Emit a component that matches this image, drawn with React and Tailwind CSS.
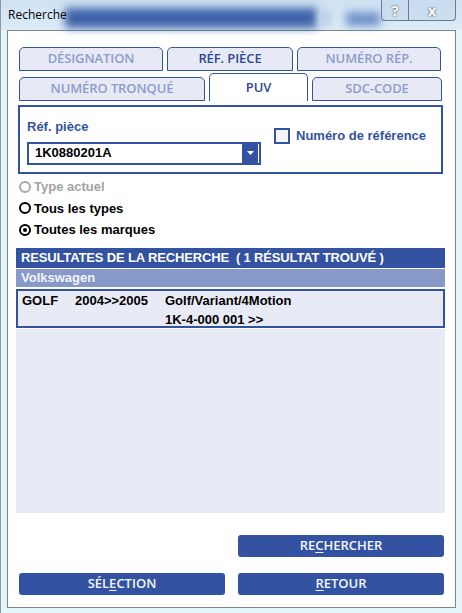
import React, { useState } from 'react';

const ui = "font-['Open_Sans','Noto_Sans',sans-serif]";
const arial = "font-['Liberation_Sans',Arial,sans-serif]";

const Tab = ({ label, width, active, dim, onClick }) => (
  <button
    onClick={onClick}
    className={`${ui} ${width} flex items-center justify-center rounded-t-[5px] border border-[#3353a2] text-[13px] font-semibold tracking-[-0.1px] ${
      active
        ? 'h-[28px] border-b-0 bg-white text-[#2c4896]'
        : 'h-[24px] bg-[#e7eaf4] ' + (dim ? 'text-[#8d9ccf]' : 'text-[#2c4896]')
    }`}
  >
    {label}
  </button>
);

const Radio = ({ label, checked, disabled }) => (
  <div className={`${arial} flex h-[21.5px] items-center gap-[3px] text-[13px] font-bold ${disabled ? 'text-[#a3a3a3]' : 'text-black'}`}>
    <span
      className={`flex h-[12px] w-[12px] items-center justify-center rounded-full border-2 ${
        disabled ? 'border-[#a8a8a8]' : 'border-black'
      }`}
    >
      {checked && <span className="h-[4px] w-[4px] rounded-full bg-black" />}
    </span>
    {label}
  </div>
);

const ActionButton = ({ before, hot, after }) => (
  <button className={`${ui} flex h-[22px] w-[206px] items-center justify-center rounded-[3px] bg-[#3353a2] text-[13px] font-semibold text-[#f4f6fb]`}>
    {before}
    <span className="underline underline-offset-2">{hot}</span>
    {after}
  </button>
);

export default function App() {
  const [tab, setTab] = useState('PUV');
  const [byNumber, setByNumber] = useState(false);

  return (
    <div className="relative h-[613px] w-[462px] overflow-hidden border-l border-[#8a9a9e] bg-[#e4f6fa]">
      {/* window caption */}
      <div className="relative h-[30px] bg-gradient-to-b from-[#cfe1f2] to-[#dcebf7]">
        <div className="absolute left-[64px] top-[8px] h-[20px] w-[252px] bg-[#3e63a9] blur-[4px]" />
        <div className="absolute left-[318px] top-[10px] h-[16px] w-[12px] bg-[#bcd2ea] blur-[3px]" />
        <div className="absolute left-[345px] top-[12px] h-[14px] w-[34px] bg-[#6f93c8] blur-[4px]" />
        <div className={`relative pl-[7px] pt-[6px] ${ui} text-[12px] text-black`}>Recherche</div>
        <div className="absolute right-[6px] top-0 flex h-[21px]">
          <div className="flex w-[28px] items-center justify-center rounded-bl-[4px] border border-t-0 border-[#6c7c90] bg-[#c8daee]/70 text-[14px] font-bold text-white [text-shadow:0_0_2px_#222]">
            ?
          </div>
          <div className="flex w-[47px] items-center justify-center rounded-br-[4px] border border-l-0 border-t-0 border-[#6c7c90] bg-[#c8daee]/70 text-[14px] font-bold text-white [text-shadow:0_0_2px_#222]">
            x
          </div>
        </div>
      </div>

      {/* client area */}
      <div className="ml-[6px] flex h-[578px] w-[449px] flex-col border border-[#7b8686] bg-white">
        <div className="flex flex-col gap-[2px] pl-[11px] pt-[16px]">
          <div className="flex gap-[4px]">
            <Tab label="DÉSIGNATION" width="w-[144px]" dim onClick={() => setTab('DES')} />
            <Tab label="RÉF. PIÈCE" width="w-[126px]" onClick={() => setTab('REF')} />
            <Tab label="NUMÉRO RÉP." width="w-[144px]" dim onClick={() => setTab('NUM')} />
          </div>
          <div className="flex items-end gap-[4px]">
            <Tab label="NUMÉRO TRONQUÉ" width="w-[186px]" dim onClick={() => setTab('TRO')} />
            <Tab label="PUV" width="w-[99px]" active={tab === 'PUV'} onClick={() => setTab('PUV')} />
            <Tab label="SDC-CODE" width="w-[130px]" dim onClick={() => setTab('SDC')} />
          </div>
        </div>

        {/* search criteria */}
        <div className="ml-[10px] mt-[4px] flex h-[69px] w-[425px] border-2 border-[#3353a2]">
          <div className="flex flex-col pl-[7px] pt-[10px]">
            <span className={`${arial} text-[13px] font-bold text-[#3353a2]`}>Réf. pièce</span>
            <div className="mt-[5px] flex h-[23px] w-[234px] items-center justify-between border-2 border-[#3353a2] pl-[6px] pr-[1px]">
              <span className={`${arial} text-[13px] font-bold text-black`}>1K0880201A</span>
              <span className="flex h-[19px] w-[16px] items-center justify-center bg-[#3353a2]">
                <svg width="7" height="4" viewBox="0 0 7 4">
                  <path d="M0 0h7L3.5 4z" fill="#fff" />
                </svg>
              </span>
            </div>
          </div>
          <label className="ml-[13px] mt-[21px] flex h-[16px] cursor-pointer items-center gap-[6px]">
            <input type="checkbox" checked={byNumber} onChange={() => setByNumber(!byNumber)} className="hidden" />
            <span className="h-[16px] w-[16px] border-2 border-[#3353a2] bg-[#f4f6f9]" />
            <span className={`${arial} text-[13px] font-bold text-[#3353a2]`}>Numéro de référence</span>
          </label>
        </div>

        <div className="ml-[11px] mt-[2px] flex flex-col">
          <Radio label="Type actuel" disabled />
          <Radio label="Tous les types" />
          <Radio label="Toutes les marques" checked />
        </div>

        {/* results */}
        <div className={`${arial} ml-[8px] mt-[7px] flex w-[429px] flex-col`}>
          <div className="flex h-[20px] items-center bg-[#3353a2] pl-[5px] text-[13px] font-bold tracking-[-0.15px] text-white">
            RESULTATES DE LA RECHERCHE&nbsp;&nbsp;( 1 RÉSULTAT TROUVÉ )
          </div>
          <div className="mt-px flex h-[18px] items-center bg-[#8699c9] pl-[5px] text-[13px] font-bold text-[#f2f4fa]">
            Volkswagen
          </div>
          <div className="mt-[2px] flex h-[39px] border-2 border-[#3353a2] bg-[#e8ebf5] pl-[4px] text-[13px] font-bold leading-[19px] text-black">
            <span className="w-[53px]">GOLF</span>
            <span className="w-[90px]">2004&gt;&gt;2005</span>
            <div className="flex flex-col">
              <span>Golf/Variant/4Motion</span>
              <span>1K-4-000 001 &gt;&gt;</span>
            </div>
          </div>
          <div className="mt-px h-[184px] bg-[#e8ebf5]" />
        </div>

        {/* actions */}
        <div className="ml-[11px] mt-[22px] flex w-[425px] flex-col gap-[16px]">
          <div className="flex justify-end">
            <ActionButton before="RE" hot="C" after="HERCHER" />
          </div>
          <div className="flex justify-between">
            <ActionButton before="SÉL" hot="E" after="CTION" />
            <ActionButton before="" hot="R" after="ETOUR" />
          </div>
        </div>
      </div>
    </div>
  );
}
